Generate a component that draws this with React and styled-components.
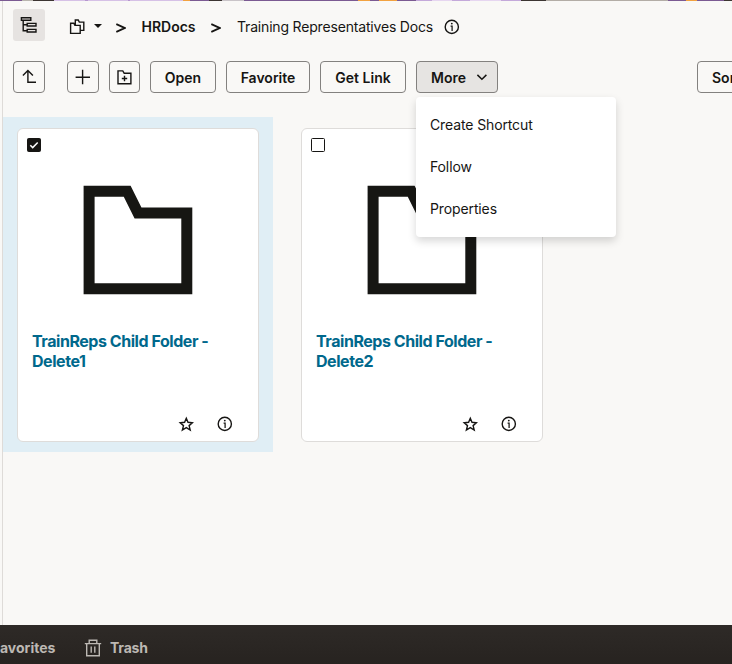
import React from 'react';
import styled, { createGlobalStyle } from 'styled-components';

const Global = createGlobalStyle`
  * { box-sizing: border-box; }
  body { margin: 0; overflow: hidden; font-family: Inter, "Liberation Sans", sans-serif; color: #161513; }
  button { font-family: inherit; color: inherit; }
`;

const Page = styled.div`
  width: 732px;
  height: 664px;
  display: flex;
  flex-direction: column;
  overflow: hidden;
  background: #f9f8f6;
`;

const Banner = styled.div`
  height: 1px;
  flex: none;
  background: linear-gradient(90deg,
    #7b5a92 0 22px, #b9b5ae 22px 33px, #3c3532 33px 54px, #d6c1e6 54px 85px,
    #b797cf 85px 88px, #d6c1e6 88px 128px, #b797cf 128px 130px, #d6c1e6 130px 183px,
    #f2a240 183px 190px, #7b5a92 190px 209px, #3c3532 209px 222px, #c9c4c8 222px 244px,
    #7b5a92 244px 358px, #f2a240 358px 370px, #7b5a92 370px 379px, #f2a240 379px 397px,
    #7b5a92 397px 416px, #c4a9da 416px 432px, #e6d6f0 432px 452px, #c4a9da 452px 470px,
    #e6d6f0 470px 501px, #c4a9da 501px 521px, #3c3532 521px 546px, #b3ada6 546px 668px,
    #7b5a92 668px 686px, #f2a240 686px 697px, #7b5a92 697px 724px, #3c3532 724px 732px);
`;

const Main = styled.main`
  flex: 1;
  margin-left: 2px;
  border-left: 1px solid #dedbd8;
  display: flex;
  flex-direction: column;
  min-height: 0;
`;

const Breadcrumb = styled.nav`
  display: flex;
  align-items: center;
  height: 32px;
  margin: 8px 0 0 10px;
  font-size: 14px;
`;

const TreeToggle = styled.button`
  width: 32px;
  height: 32px;
  padding: 0;
  border: 0;
  border-radius: 3px;
  background: #e6e3e1;
  display: flex;
  align-items: center;
  justify-content: center;
  margin-right: 22px;
`;

const Separator = styled.svg`
  width: 10px;
  height: 10px;
  margin: 5px ${p => p.$after}px 0 ${p => p.$before}px;
  flex: none;
`;

const CaretIcon = styled.svg`
  width: 8px;
  height: 4px;
  margin: 2px 1px 0 7px;
`;

const Crumb = styled.span`
  width: ${p => p.$width}px;
  margin-top: 3px;
  white-space: nowrap;
  font-weight: ${p => (p.$strong ? 600 : 400)};
  letter-spacing: ${p => p.$track || 0}px;
`;

const CrumbInfo = styled.span`
  margin-top: 3px;
`;

const Toolbar = styled.div`
  display: flex;
  height: 32px;
  margin: 20px 0 0 10px;
  gap: 10px;
`;

const ToolButton = styled.button`
  position: relative;
  flex: none;
  width: ${p => p.$width}px;
  height: 32px;
  margin: 0 0 0 ${p => p.$lead || 0}px;
  padding: 1px 0 0;
  display: flex;
  align-items: center;
  justify-content: center;
  gap: 10px;
  border: 1px solid #83817f;
  border-radius: 4px;
  background: ${p => (p.$open ? '#e6e4e2' : 'transparent')};
  font-size: 14px;
  font-weight: 600;
  white-space: nowrap;
`;

const IconButton = styled(ToolButton)`
  padding: 0;
`;

const MoreButton = styled(ToolButton)`
  padding-left: 5px;
`;

const SortButton = styled(ToolButton)`
  justify-content: flex-start;
  padding-left: 14px;
`;

const Menu = styled.div`
  position: absolute;
  z-index: 2;
  top: 35px;
  left: -1px;
  width: 200px;
  height: 140px;
  padding: 7px 0;
  border-radius: 4px;
  background: #fff;
  box-shadow: 0 4px 8px rgba(0, 0, 0, 0.16);
  text-align: left;
`;

const MenuItem = styled.div`
  height: 42px;
  line-height: 42px;
  padding-left: 14px;
  font-size: 14px;
  font-weight: 400;
  letter-spacing: -0.12px;
`;

const Grid = styled.div`
  display: flex;
  gap: 14px;
  margin-top: 24px;
  flex: 1;
  align-items: flex-start;
`;

const Cell = styled.div`
  width: 270px;
  height: 335px;
  padding: 11px 14px 10px;
  background: ${p => (p.$selected ? '#e0eef5' : 'transparent')};
`;

const Card = styled.article`
  width: 242px;
  height: 314px;
  border: 1px solid #dedcda;
  border-radius: 6px;
  background: #fff;
  display: flex;
  flex-direction: column;
`;

const Check = styled.span`
  width: 14px;
  height: 14px;
  margin: 9px 0 0 9px;
  border: 1px solid #161513;
  border-radius: 1.5px;
  background: ${p => (p.$checked ? '#161513' : '#fff')};
  display: flex;
  align-items: center;
  justify-content: center;
  flex: none;
`;

const FolderIcon = styled.svg`
  width: 110px;
  height: 110px;
  margin: 33px 0 0 65px;
  flex: none;
`;

const Title = styled.h3`
  margin: 36px 14px 0;
  color: #00688c;
  font-size: 16px;
  line-height: 20px;
  font-weight: 700;
  letter-spacing: -0.45px;
  white-space: pre-line;
`;

const Actions = styled.div`
  display: flex;
  justify-content: flex-end;
  gap: 23px;
  margin: auto 25px 9px 0;
`;

const Icon = styled.svg`
  width: ${p => p.$size || 16}px;
  height: ${p => p.$size || 16}px;
  display: block;
  flex: none;
`;

const Footer = styled.footer`
  height: 39px;
  flex: none;
  display: flex;
  align-items: center;
  padding-top: 7px;
  background: linear-gradient(#2e2a27, #272320);
  color: #bcb8b3;
  font-size: 14px;
  font-weight: 700;
`;

const FooterItem = styled.span`
  display: flex;
  align-items: center;
  gap: 8px;
  margin-left: ${p => p.$offset}px;
  width: ${p => p.$width}px;
  white-space: nowrap;
`;

const FooterLabel = styled.span`
  margin-bottom: 2px;
  letter-spacing: ${p => p.$track || 0}px;
`;

const Info = () => (
  <Icon viewBox="0 0 16 16" fill="none" stroke="#161513">
    <circle cx="7.8" cy="7.9" r="6.6" strokeWidth="1.4" />
    <path d="M6.6 7h1.5v5" strokeWidth="1.25" />
    <circle cx="7.8" cy="4.6" r=".9" fill="#161513" stroke="none" />
  </Icon>
);

const Star = () => (
  <Icon viewBox="0 0 16 16" fill="none" stroke="#161513" strokeWidth="1.4">
    <path d="M8.3 2.3l1.7 4 4.4.4-3.3 2.9 1.1 4.4-3.9-2.4L4.4 14l1.1-4.4-3.3-2.9 4.4-.4z" />
  </Icon>
);

const Chevron = ({ before, after }) => (
  <Separator $before={before} $after={after} viewBox="0 0 10 10" fill="none" stroke="#161513" strokeWidth="1.9">
    <path d="M.3 1.2L8.6 5 .3 8.8" />
  </Separator>
);

function FolderCard({ name, selected }) {
  return (
    <Cell $selected={selected}>
      <Card>
        <Check $checked={selected}>
          {selected && (
            <Icon $size={12} viewBox="0 0 12 12" fill="none" stroke="#fff" strokeWidth="1.5">
              <path d="M2.3 6.2l2.4 2.4 5-5.2" />
            </Icon>
          )}
        </Check>
        <FolderIcon viewBox="0 0 110 110" fill="none" stroke="#161613" strokeWidth="11">
          <path d="M6.1 6.2H44.2L55 28H103.8V103.8H6.1z" />
        </FolderIcon>
        <Title>{name}</Title>
        <Actions><Star /><Info /></Actions>
      </Card>
    </Cell>
  );
}

export default function App() {
  return (
    <Page>
      <Global />
      <Banner />
      <Main>
        <Breadcrumb>
          <TreeToggle aria-label="Toggle folder tree">
            <Icon $size={18} viewBox="0 0 18 18" fill="none" stroke="#161513" strokeWidth="1.4">
              <path d="M1.4 1.7h9.4v2.6H1.4zM7.2 7.4H16V10H7.2zM7.2 13.4H16V16H7.2zM3.2 4.3v10.4h4M3.2 8.7h4" />
            </Icon>
          </TreeToggle>
          <Icon $size={20} viewBox="0 0 20 20" fill="none" stroke="#161513" strokeWidth="1.4">
            <path d="M3.6 8.3h3.2l1.1 2.1h5.3v8H3.6zM8.3 10V5h2.9l1.1 2.1h4.5v8.3h-3.5" />
          </Icon>
          <CaretIcon viewBox="0 0 8 4"><path d="M0 0h8L4 4z" fill="#161513" /></CaretIcon>
          <Chevron before={13} after={15.5} />
          <Crumb $strong $width={54.5}>HRDocs</Crumb>
          <Chevron before={15} after={16} />
          <Crumb $width={207} $track={-0.18}>Training Representatives Docs</Crumb>
          <CrumbInfo><Info /></CrumbInfo>
        </Breadcrumb>
        <Toolbar>
          <IconButton $width={32} aria-label="Up one level">
            <Icon viewBox="0 0 16 16" fill="none" stroke="#161513" strokeWidth="1.4"><path d="M6.9 1.8v11.4H15M1.9 6.5l5-5 5 5" /></Icon>
          </IconButton>
          <IconButton $width={32} $lead={12} aria-label="Add">
            <Icon viewBox="0 0 16 16" fill="none" stroke="#161513" strokeWidth="1.4"><path d="M7.6 .8v14.4M.6 8.3h14.4" /></Icon>
          </IconButton>
          <IconButton $width={31} aria-label="New folder">
            <Icon viewBox="0 0 16 16" fill="none" stroke="#161513" strokeWidth="1.4"><path d="M1 1.9h4.8l1.4 2.4h6.7v10.4H1zM7.5 6.8v5.4M4.8 9.5h5.4" /></Icon>
          </IconButton>
          <ToolButton $width={66}>Open</ToolButton>
          <ToolButton $width={84}>Favorite</ToolButton>
          <ToolButton $width={86}>Get Link</ToolButton>
          <MoreButton as="div" $width={82} $open>
            More
            <Icon $size={12} viewBox="0 0 12 12" fill="none" stroke="#161513" strokeWidth="1.5"><path d="M1.4 2.9l4.5 4.4 4.5-4.4" /></Icon>
            <Menu>
              <MenuItem>Create Shortcut</MenuItem>
              <MenuItem>Follow</MenuItem>
              <MenuItem>Properties</MenuItem>
            </Menu>
          </MoreButton>
          <SortButton $width={90} $lead={189}>Sort By</SortButton>
        </Toolbar>
        <Grid>
          <FolderCard selected name={'TrainReps Child Folder -\nDelete1'} />
          <FolderCard name={'TrainReps Child Folder -\nDelete2'} />
        </Grid>
      </Main>
      <Footer>
        <FooterItem $offset={-8} $width={92}>
          <FooterLabel>Favorites</FooterLabel>
        </FooterItem>
        <FooterItem $offset={0} $width={80}>
          <Icon $size={18} viewBox="0 0 18 18" fill="none" stroke="#bcb8b3" strokeWidth="1.4"><path d="M.8 4.6h16.4M5.2 4.4V1.2h7.6v3.2M2.7 4.8v12h12.6v-12M7.2 7.5v6.3M10.8 7.5v6.3" /></Icon>
          <FooterLabel $track={-0.2}>Trash</FooterLabel>
        </FooterItem>
      </Footer>
    </Page>
  );
}
